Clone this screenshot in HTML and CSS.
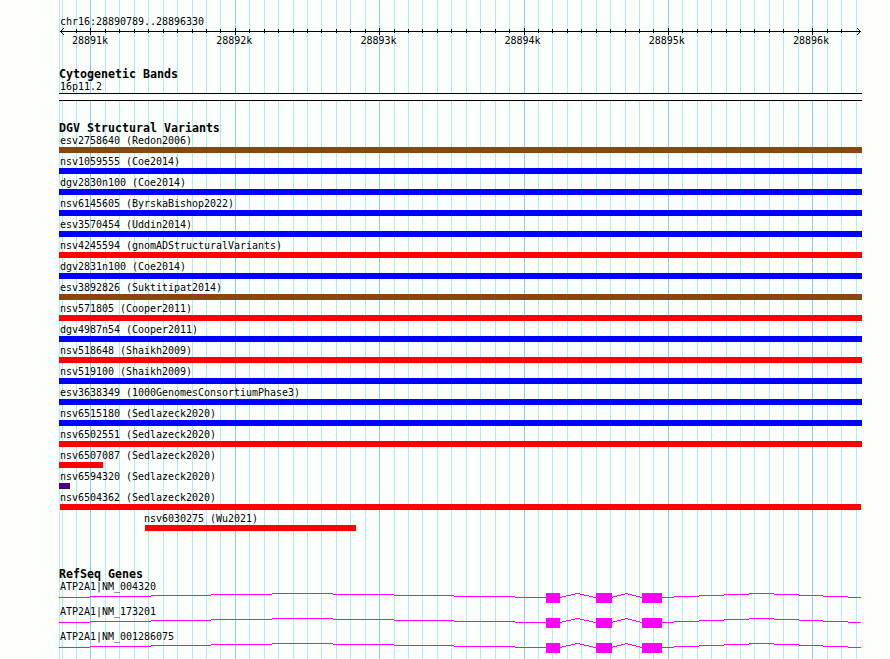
FILE: index.html
```
<!DOCTYPE html>
<html lang="en">
<head>
    <meta charset="UTF-8">
    <title>chr16:28890789..28896330</title>
    <link rel="stylesheet" href="styles.css">
</head>
<body>
    <svg class="grid" width="890" height="659" shape-rendering="crispEdges">
        <path id="minor" class="minor"/>
        <path id="major" class="major"/>
    </svg>

    <div class="panel">
        <div class="ruler">
            <div class="label">chr16:28890789..28896330</div>
            <svg class="axis" width="803" height="9" shape-rendering="crispEdges">
                <path d="M1 4.5H802M1.5 4V5M2.5 3V4M3.5 2V3M4.5 1V2M2.5 5V6M3.5 6V7M4.5 7V8M801.5 4V5M800.5 3V4M799.5 2V3M798.5 1V2M800.5 5V6M799.5 6V7M798.5 7V8"/>
                <path id="ticks"/>
            </svg>
            <div class="scale">
                <span>28891k</span>
                <span>28892k</span>
                <span>28893k</span>
                <span>28894k</span>
                <span>28895k</span>
                <span>28896k</span>
            </div>
        </div>

        <div class="cytobands">
            <h2>Cytogenetic Bands</h2>
            <div class="label">16p11.2</div>
            <div class="band"></div>
        </div>

        <div class="variants">
            <h2>DGV Structural Variants</h2>
            <div id="variant-list"></div>
        </div>

        <div class="genes">
            <h2>RefSeq Genes</h2>
            <div id="gene-list"></div>
        </div>
    </div>

    <script>
        // pixel columns of the 100 bp grid, every tenth one is a major line
        const minor = [59, 62, 76, 105, 119, 134, 148, 163, 177, 192, 206, 220, 249, 264, 278, 293, 307, 321,
            336, 350, 365, 394, 408, 422, 437, 451, 466, 480, 495, 509, 538, 552, 567, 581, 596, 610, 625,
            639, 653, 682, 697, 711, 726, 740, 754, 769, 783, 798, 827, 841, 856];
        const major = [90, 235, 379, 524, 668, 812];
        const left = 59;

        function lines(columns, top, bottom, offset) {
            return columns.map(x => `M${x - offset + 0.5} ${top}V${bottom}`).join('');
        }

        document.getElementById('minor').setAttribute('d', lines(minor, 0, 659, 0));
        document.getElementById('major').setAttribute('d', lines(major, 0, 659, 0));
        document.getElementById('ticks').setAttribute('d',
            lines(minor.slice(2, -1), 2, 6, left) + lines(major, 1, 8, left));

        // name, type, start, width
        const variants = [
            ['esv2758640 (Redon2006)', 'complex', 0, 803],
            ['nsv1059555 (Coe2014)', 'gain', 0, 803],
            ['dgv2830n100 (Coe2014)', 'gain', 0, 803],
            ['nsv6145605 (ByrskaBishop2022)', 'gain', 0, 803],
            ['esv3570454 (Uddin2014)', 'gain', 0, 803],
            ['nsv4245594 (gnomADStructuralVariants)', 'loss', 0, 803],
            ['dgv2831n100 (Coe2014)', 'gain', 0, 803],
            ['esv3892826 (Suktitipat2014)', 'complex', 0, 803],
            ['nsv571805 (Cooper2011)', 'loss', 0, 803],
            ['dgv4987n54 (Cooper2011)', 'gain', 0, 803],
            ['nsv518648 (Shaikh2009)', 'loss', 0, 803],
            ['nsv519100 (Shaikh2009)', 'gain', 0, 803],
            ['esv3638349 (1000GenomesConsortiumPhase3)', 'gain', 0, 803],
            ['nsv6515180 (Sedlazeck2020)', 'gain', 0, 803],
            ['nsv6502551 (Sedlazeck2020)', 'loss', 0, 803],
            ['nsv6507087 (Sedlazeck2020)', 'loss', 0, 44],
            ['nsv6594320 (Sedlazeck2020)', 'inversion', 0, 11],
            ['nsv6504362 (Sedlazeck2020)', 'loss', 1, 801],
            ['nsv6030275 (Wu2021)', 'loss', 86, 211]
        ];

        document.getElementById('variant-list').innerHTML = variants.map(([name, type, start, width]) => `
            <div class="variant" style="margin-left: ${start}px">
                <div class="label ${start ? 'shifted' : ''}">${name}</div>
                <div class="bar ${type}" style="width: ${width}px"></div>
            </div>`).join('');

        // intron steps: x from, x to, y
        const introns = [
            [59, 90, 8], [90, 151, 7], [151, 211, 6], [211, 272, 5], [272, 333, 4], [333, 394, 5],
            [394, 454, 6], [454, 515, 7], [515, 546, 8],
            [560, 562, 8], [562, 566, 7], [566, 571, 6], [571, 575, 5], [575, 580, 4], [580, 584, 5],
            [584, 589, 6], [589, 593, 7], [593, 596, 8],
            [612, 613, 8], [613, 617, 7], [617, 621, 6], [621, 625, 5], [625, 628, 4], [628, 632, 5],
            [632, 636, 6], [636, 640, 7], [640, 642, 8],
            [662, 674, 8], [674, 699, 7], [699, 724, 6], [724, 749, 5], [749, 774, 4], [774, 799, 5],
            [799, 823, 6], [823, 848, 7], [848, 861, 8]
        ];
        const intronPath = introns.map(([a, b, y]) => `M${a - left} ${y + 0.5}H${b - left}`).join('');

        document.getElementById('gene-list').innerHTML =
            ['ATP2A1|NM_004320', 'ATP2A1|NM_173201', 'ATP2A1|NM_001286075'].map(name => `
            <div class="gene">
                <div class="label">${name}</div>
                <svg width="803" height="14" shape-rendering="crispEdges">
                    <path class="intron" d="${intronPath}"/>
                    <rect x="487" y="4" width="14" height="10"/>
                    <rect x="537" y="4" width="16" height="10"/>
                    <rect x="583" y="4" width="20" height="10"/>
                </svg>
            </div>`).join('');
    </script>
</body>
</html>
```
FILE: styles.css
```
body {
    margin: 0;
    height: 659px;
    overflow: hidden;
    background: #fdfffc;
    color: #000;
    font-family: 'DejaVu Sans Mono', monospace;
    font-size: 10px;
    letter-spacing: -0.02px;
}

svg {
    display: block;
}

.grid {
    position: absolute;
    top: 0;
    left: 0;
    z-index: -1;
    fill: none;
}

.grid .minor {
    stroke: #afeeee;
}

.grid .major {
    stroke: #87ceeb;
}

.panel {
    width: 803px;
    margin-left: 59px;
    padding-top: 15px;
}

h2 {
    margin: 0;
    height: 12px;
    line-height: 12px;
    font-size: 11.65px;
    letter-spacing: -0.014px;
    white-space: pre;
}

.label {
    height: 12px;
    line-height: 14px;
    padding-left: 1px;
    white-space: pre;
}

.label.shifted {
    padding-left: 0;
}

.variant:last-child .label {
    margin-left: -1px;
}

.axis {
    stroke: #000;
    fill: none;
}

.scale {
    display: flex;
    gap: 108.2px;
    margin-left: 13px;
    line-height: 10px;
    height: 12px;
}

.scale span {
    width: 36px;
}

.cytobands {
    margin-top: 20px;
}

.band {
    height: 6px;
    margin-top: 1px;
    border-top: 1px solid #000;
    border-bottom: 1px solid #000;
    background: #fdfffc;
}

.variants {
    margin-top: 21px;
}

.variant {
    height: 21px;
}

.bar {
    height: 6px;
    margin-top: 1px;
}

.gain {
    background: #0000ff;
}

.loss {
    background: #ff0000;
}

.complex {
    background: #8b4513;
}

.inversion {
    background: #4b0082;
}

.genes {
    margin-top: 35px;
}

.gene {
    height: 25px;
}

.gene svg {
    margin-top: -3px;
    fill: #ff00ff;
}

.intron {
    stroke: #ff00ff;
}
```
